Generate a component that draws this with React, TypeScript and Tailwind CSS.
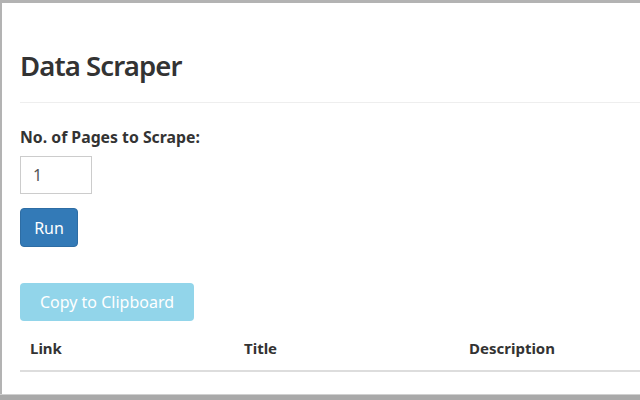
const App = () => {
    return (
        <div className="flex h-[400px] w-[640px] flex-col overflow-hidden bg-white font-['Noto_Sans',sans-serif] text-[#333]">
            <div className="flex-1 overflow-hidden border-l-2 border-t-[3px] border-[#b3b3b3] pl-[18px] pt-[46px]">
                {/* heading */}
                <h1 className="text-[27.5px] font-semibold leading-[33px] tracking-[-0.9px]">Data Scraper</h1>
                <hr className="mt-[20px] border-t border-[#eee]" />

                {/* form */}
                <label className="mt-[24px] block text-[15.8px] font-bold leading-[20px]">
                    No. of Pages to Scrape:
                </label>
                <input
                    type="text"
                    defaultValue="1"
                    className="mt-[9px] block h-[38px] w-[72px] border border-[#ccc] px-[12px] text-[16px] text-[#555] outline-none"
                />
                <button className="mt-[14px] block h-[39px] w-[58px] rounded-[4px] border border-[#2e6da4] bg-[#337ab7] text-[16px] text-white">
                    Run
                </button>
                <button
                    disabled
                    className="mt-[36px] block h-[38px] w-[174px] rounded-[4px] bg-[#92d5ea] text-[16px] text-white"
                >
                    Copy to Clipboard
                </button>

                {/* results */}
                <table className="mt-[11px] w-[700px] border-collapse text-left text-[15px]">
                    <thead>
                        <tr className="border-b-2 border-[#ddd]">
                            <th className="w-[224px] px-[10px] pb-[12px] pt-[6px] font-bold leading-[20px]">Link</th>
                            <th className="w-[225px] px-[0px] pb-[12px] pt-[6px] font-bold leading-[20px]">Title</th>
                            <th className="px-[0px] pb-[12px] pt-[6px] font-bold leading-[20px]">Description</th>
                        </tr>
                    </thead>
                    <tbody />
                </table>
            </div>
            <div className="h-[6px] border-t border-[#d0d0d0] bg-[#a9a9a9]" />
        </div>
    );
};

export default App;
